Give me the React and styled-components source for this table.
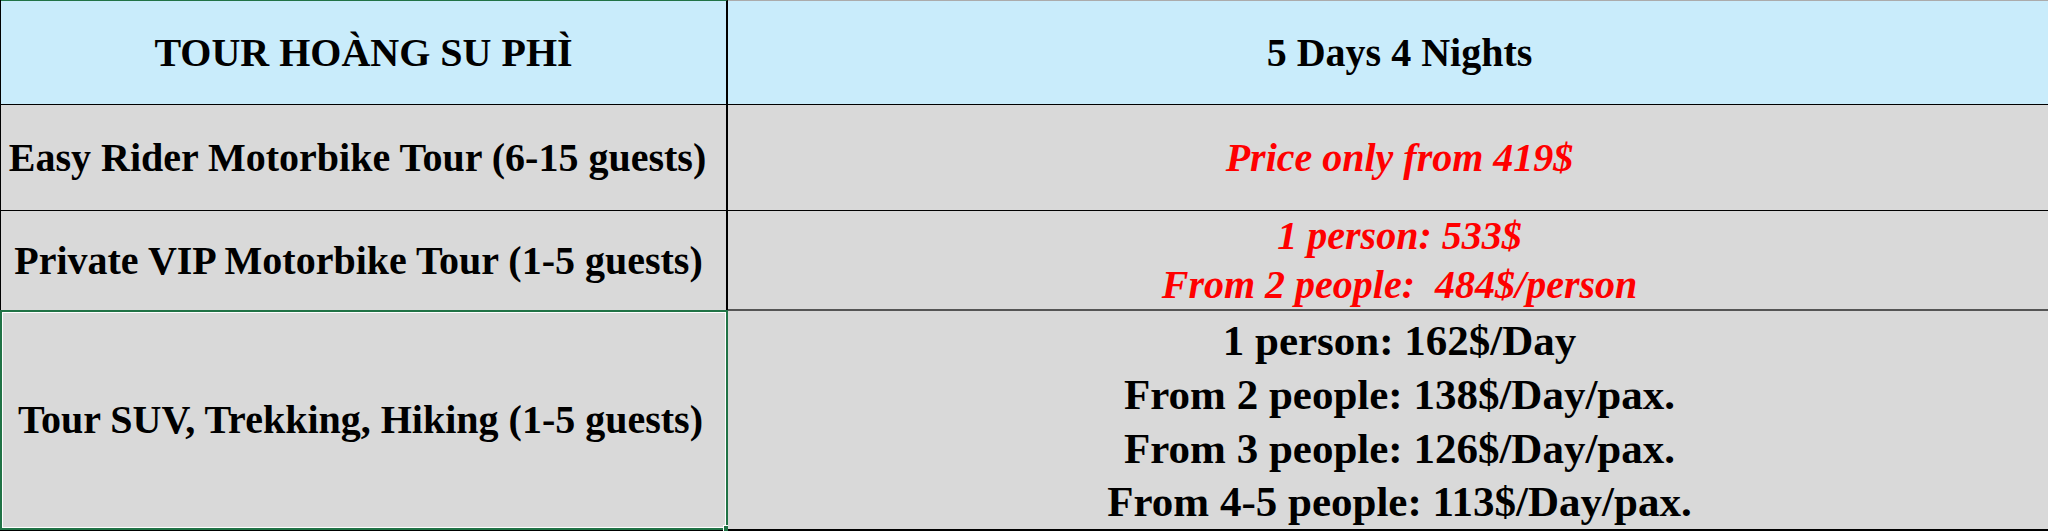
import React from "react";
import styled, { createGlobalStyle } from "styled-components";

const GlobalStyle = createGlobalStyle`
  html, body {
    margin: 0;
    padding: 0;
    background: #ffffff;
    overflow: hidden;
  }
`

const Sheet = styled.div`
  display: grid;
  grid-template-columns: 727px 1343px;
  grid-template-rows: 105px 106px 100px 220px;
  width: 2070px;
  font-family: "Liberation Serif", "Times New Roman", serif;
  font-weight: bold;
  color: #000;
  border-left: 1px solid #000;
  position: relative;
`

const Cell = styled.div`
  position: relative;
  display: flex;
  flex-direction: column;
  align-items: center;
  justify-content: center;
  box-sizing: border-box;
  padding-top: ${p => p.$padTop || "0"};
  padding-right: ${p => p.$padRight || "0"};
  background: ${p => (p.$head ? "#c9ecfb" : "#d9d9d9")};
  border-bottom: ${p => p.$bottom || "1px solid #000"};
  border-right: ${p => (p.$left ? "2px solid #000" : "none")};
  border-top: ${p => (p.$top ? `1px solid ${p.$top}` : "none")};
  white-space: nowrap;
`

const Label = styled.span`
  font-size: 40px;
  line-height: 46px;
`

const Line = styled.div`
  font-size: ${p => (p.$red ? "40px" : "43px")};
  line-height: ${p => (p.$red ? "49px" : "53.8px")};
  font-style: ${p => (p.$red ? "italic" : "normal")};
  color: ${p => (p.$red ? "#ff0000" : "#000")};
  white-space: pre;
`

const Selection = styled.div`
  position: absolute;
  left: -1px;
  top: -1px;
  right: -2px;
  bottom: -1px;
  border: 2px solid #217346;
  box-shadow: inset 0 0 0 1px #ffffff;
  pointer-events: none;
`

const Handle = styled.div`
  position: absolute;
  right: -5px;
  bottom: -5px;
  width: 6px;
  height: 6px;
  background: #217346;
  border: 1px solid #ffffff;
`

export default function App() {
  return (
    <>
      <GlobalStyle />
      <Sheet>
        <Cell $head $left $top="#217346">
          <Label>TOUR HOÀNG SU PHÌ</Label>
        </Cell>
        <Cell $head $top="#ababab">
          <Label>5 Days 4 Nights</Label>
        </Cell>

        <Cell $left $padRight="12px">
          <Label>Easy Rider Motorbike Tour (6-15 guests)</Label>
        </Cell>
        <Cell>
          <Line $red>Price only from 419$</Line>
        </Cell>

        <Cell $left $padRight="10px">
          <Label>Private VIP Motorbike Tour (1-5 guests)</Label>
        </Cell>
        <Cell $bottom="2px solid #555">
          <Line $red>1 person: 533$</Line>
          <Line $red>From 2 people:  484$/person</Line>
        </Cell>

        <Cell $left $padRight="6px" $bottom="2px solid #000">
          <Label>Tour SUV, Trekking, Hiking (1-5 guests)</Label>
          <Selection>
            <Handle />
          </Selection>
        </Cell>
        <Cell $padTop="3px" $bottom="2px solid #000">
          <Line>1 person: 162$/Day</Line>
          <Line>From 2 people: 138$/Day/pax.</Line>
          <Line>From 3 people: 126$/Day/pax.</Line>
          <Line>From 4-5 people: 113$/Day/pax.</Line>
        </Cell>
      </Sheet>
    </>
  )
}
